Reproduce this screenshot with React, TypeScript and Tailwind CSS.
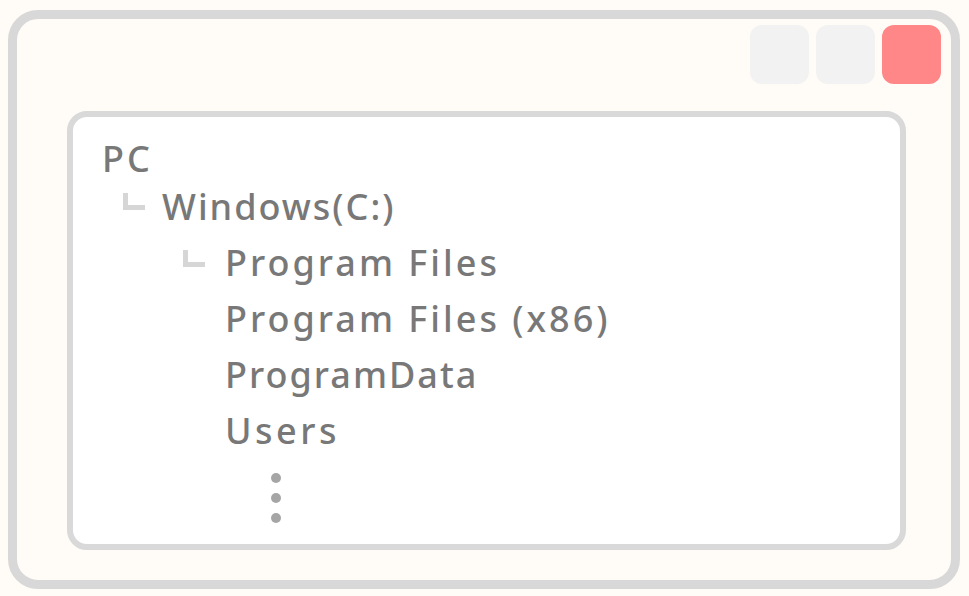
import React from "react";

const font = { fontFamily: '"Noto Sans", "Noto Sans CJK JP", sans-serif' };

function Elbow({ className = "" }: { className?: string }) {
  return (
    <span
      className={`block w-[22px] h-[17px] border-l-[5px] border-b-[5px] border-[#d6d6d6] shrink-0 ${className}`}
    />
  );
}

export default function App() {
  return (
    <div className="w-[969px] h-[596px] bg-[#fffbf7] pt-[10px] pl-[8px]">
      <div className="w-[952px] h-[579px] border-[9px] border-[#d8d8d8] rounded-[30px] flex flex-col">
        <div className="flex justify-end gap-[7px] pt-[6px] pr-[10px]">
          <div className="w-[59px] h-[59px] rounded-[12px] bg-[#f2f2f2]" />
          <div className="w-[59px] h-[59px] rounded-[12px] bg-[#f2f2f2]" />
          <div className="w-[59px] h-[59px] rounded-[12px] bg-[#ff8787]" />
        </div>
        <div
          className="mt-[27px] ml-[50px] w-[839px] h-[439px] border-[6px] border-[#d9d9d9] rounded-[20px] bg-white pt-[18px] text-[36px] leading-[48px] text-[#787878] font-medium tracking-[3px]"
          style={font}
        >
          <div className="pl-[29px]">PC</div>
          <div className="flex pl-[50px]">
            <Elbow className="mt-[10px]" />
            <span className="ml-[17px] tracking-[2px]">Windows(C:)</span>
          </div>
          <div className="flex flex-col gap-[8px] mt-[8px]">
            <div className="flex pl-[110px]">
              <Elbow className="mt-[11px]" />
              <span className="ml-[20px]">Program Files</span>
            </div>
            <div className="pl-[152px]">Program Files (x86)</div>
            <div className="pl-[152px] tracking-[2px]">ProgramData</div>
            <div className="pl-[152px] tracking-[3.5px]">Users</div>
          </div>
          <div className="flex flex-col gap-[10px] mt-[18px] pl-[198px]">
            <span className="block w-[10px] h-[10px] rounded-full bg-[#a5a5a5]" />
            <span className="block w-[10px] h-[10px] rounded-full bg-[#a5a5a5]" />
            <span className="block w-[10px] h-[10px] rounded-full bg-[#a5a5a5]" />
          </div>
        </div>
      </div>
    </div>
  );
}
